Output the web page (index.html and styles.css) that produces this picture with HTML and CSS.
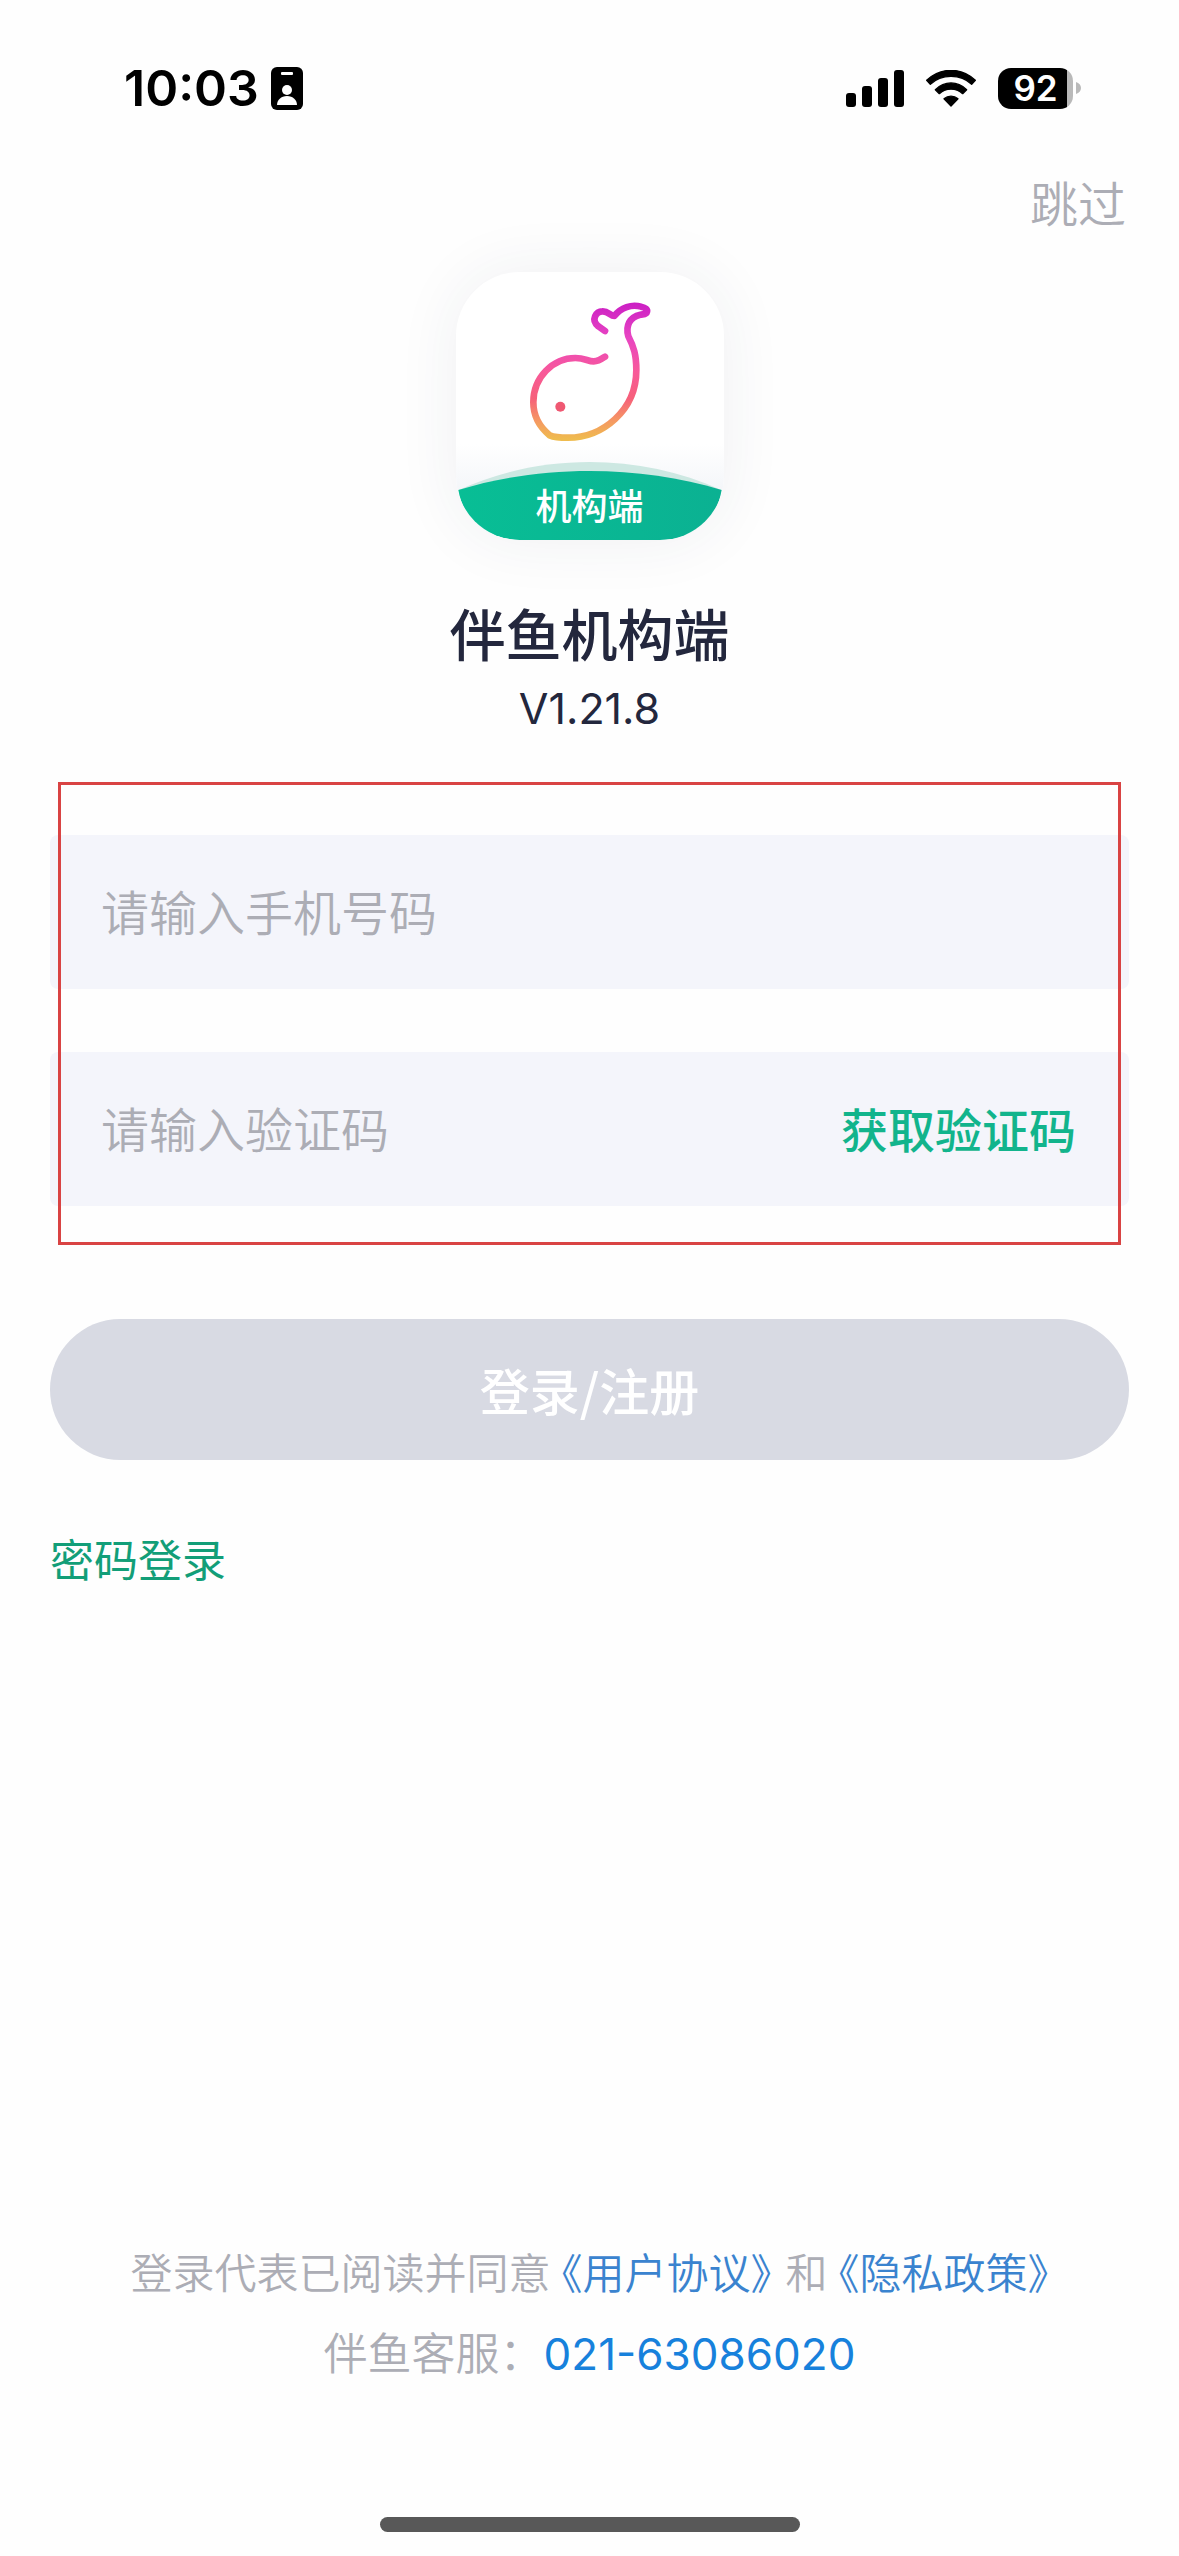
FILE: index.html
```
<!DOCTYPE html>
<html lang="zh-CN">
    <head>
        <meta charset="UTF-8">
        <meta name="viewport" content="width=device-width, initial-scale=1">
        <title>伴鱼机构端</title>
        <link rel="stylesheet" href="styles.css">
    </head>

    <body class="login">
        <div class="status">
            <span class="status__time">10:03</span>
            <svg class="status__badge" width="32" height="43" viewBox="0 0 32 43" aria-hidden="true">
                <rect width="32" height="43" rx="6"/>
                <rect x="10" y="5" width="12" height="3" rx="1" fill="#fff"/>
                <circle cx="16" cy="23" r="5" fill="#fff"/>
                <path d="M6 38c0-5 4-9 10-9s10 4 10 9z" fill="#fff"/>
            </svg>

            <div class="status__icons">
                <svg width="58" height="37" viewBox="0 0 58 37" aria-hidden="true">
                    <rect y="23" width="10" height="14" rx="3"/>
                    <rect x="16" y="16" width="10" height="21" rx="3"/>
                    <rect x="32" y="8" width="10" height="29" rx="3"/>
                    <rect x="48" width="10" height="37" rx="3"/>
                </svg>
                <svg width="50" height="37" viewBox="320 87 150 111" aria-hidden="true">
                    <g stroke="#000" stroke-width="4" stroke-linejoin="round">
                        <path d="M322 118C364 78 426 78 468 118L457 130C424 98 366 98 333 130Z"/>
                        <path d="M348 146C376 119 414 119 442 146L430 158C410 140 380 140 360 158Z"/>
                        <path d="M374 173C386 163 404 163 416 173L395 195Z"/>
                    </g>
                </svg>
                <div class="status__battery">
                    <span class="status__battery__level">92</span>
                    <svg width="5" height="12" viewBox="0 0 5 12" aria-hidden="true">
                        <path d="M0 0c3 1 5 3 5 6s-2 5-5 6z" fill="#b9b9b9"/>
                    </svg>
                </div>
            </div>
        </div>

        <main class="login__main">
            <button class="login__skip" type="button">跳过</button>

            <header class="brand">
                <div class="brand__logo">
                    <svg class="brand__logo__art" viewBox="169 154 804 804" aria-hidden="true">
                        <defs>
                            <linearGradient id="fish" gradientUnits="userSpaceOnUse" x1="0" y1="250" x2="0" y2="655">
                                <stop offset="0" stop-color="#cc20c4"/>
                                <stop offset="0.25" stop-color="#e845c2"/>
                                <stop offset="0.5" stop-color="#f8599a"/>
                                <stop offset="0.7" stop-color="#f6607a"/>
                                <stop offset="0.87" stop-color="#f59a62"/>
                                <stop offset="1" stop-color="#efbb4e"/>
                            </linearGradient>
                            <linearGradient id="wave" x1="0" y1="0" x2="1" y2="0">
                                <stop offset="0" stop-color="#08be95"/>
                                <stop offset="1" stop-color="#0bb192"/>
                            </linearGradient>
                            <linearGradient id="haze" x1="0" y1="0" x2="0" y2="1">
                                <stop offset="0" stop-color="#fff"/>
                                <stop offset="1" stop-color="#f4f6f9"/>
                            </linearGradient>
                        </defs>
                        <path d="M169 670H975V808H169Z" fill="url(#haze)"/>
                        <path d="M177 808C420 696 720 696 965 808Z" fill="#cde8e2"/>
                        <path d="M176 808C420 732 720 732 966 808C950 900 885 958 780 958H370C262 958 192 900 176 808Z" fill="url(#wave)"/>
                        <g fill="none" stroke="url(#fish)" stroke-width="20" stroke-linecap="round" stroke-linejoin="round">
                            <path d="M616 331L596 317C572 297 590 272 608 272C626 271 632 286 644 286C664 260 696 250 724 258C738 261 744 267 742 273C740 282 732 280 722 282C690 289 677 315 686 347C702 378 710 402 710 448C710 570 608 651 505 651C480 651 462 649 450 644C416 616 401 580 401 545C401 470 460 412 527 412C555 412 565 422 582 422C597 422 606 415 616 408"/>
                        </g>
                        <circle cx="482" cy="558" r="15" fill="#ef5872"/>
                    </svg>
                    <span class="brand__logo__label">机构端</span>
                </div>
                <h1 class="brand__name">伴鱼机构端</h1>
                <p class="brand__version">V1.21.8</p>
            </header>

            <form class="form">
                <div class="form__fields">
                    <div class="form__field">
                        <input class="form__input" type="tel" placeholder="请输入手机号码" aria-label="手机号码">
                    </div>
                    <div class="form__field">
                        <input class="form__input" type="text" placeholder="请输入验证码" aria-label="验证码">
                        <button class="form__code" type="button">获取验证码</button>
                    </div>
                </div>
                <button class="form__submit" type="submit" disabled>登录/注册</button>
            </form>

            <a class="login__password" href="#">密码登录</a>
        </main>

        <footer class="footer">
            <p class="footer__terms">登录代表已阅读并同意<a class="footer__link" href="#">《用户协议》</a>和<a class="footer__link" href="#">《隐私政策》</a></p>
            <p class="footer__service">伴鱼客服：<a class="footer__phone" href="tel:021-63086020">021-63086020</a></p>
            <div class="footer__home"></div>
        </footer>
    </body>
</html>
```

FILE: styles.css
```
:root {
    --color-primary: #12b48c;
    --color-primary-dark: #129e78;
    --color-text: #23273d;
    --color-muted: #acadb5;
    --color-field: #f4f5fb;
    --color-disabled: #d8dae3;
    --color-link: #3a83cf;
    --color-phone: #1781dc;
    --color-frame: #d94343;
    --gutter: 50px;
}

* {
    box-sizing: border-box;
}

body,
h1,
p {
    margin: 0;
}

button,
input {
    background: none;
    border: none;
    font: inherit;
    margin: 0;
    padding: 0;
}

a {
    text-decoration: none;
}

svg {
    display: block;
}

.login {
    background-color: #fefefe;
    color: var(--color-text);
    display: flex;
    flex-direction: column;
    font-family: Inter, "Noto Sans CJK SC", sans-serif;
    font-size: 48px;
    line-height: 64px;
    min-height: 100vh;
}

/* status bar */
.status {
    align-items: center;
    color: #000;
    display: flex;
    gap: 12px;
    padding: 56px 98px 0 124px;
}

.status__time {
    font-size: 50px;
    font-weight: 600;
}

.status__icons {
    align-items: center;
    display: flex;
    gap: 22px;
    margin-left: auto;
}

.status__battery {
    align-items: center;
    display: flex;
    gap: 3px;
}

.status__battery__level {
    background: linear-gradient(90deg, #000 69px, #b9b9b9 69px);
    border-radius: 13px;
    color: #fff;
    font-size: 35px;
    font-weight: 600;
    line-height: 41px;
    text-align: center;
    width: 75px;
}

/* main column */
.login__main {
    align-items: flex-start;
    display: flex;
    flex-direction: column;
    padding: 53px var(--gutter) 0;
}

.login__skip {
    align-self: flex-end;
    color: var(--color-muted);
    font-weight: 350;
    padding-right: 3px;
}

.brand {
    align-items: center;
    align-self: stretch;
    display: flex;
    flex-direction: column;
    padding: 35px 0 99px;
}

.brand__logo {
    background-color: #fff;
    border-radius: 64px;
    box-shadow: 0 0 64px rgba(40, 50, 80, 0.07);
    height: 268px;
    overflow: hidden;
    position: relative;
    width: 268px;
}

.brand__logo__art {
    height: 100%;
    width: 100%;
}

.brand__logo__label {
    bottom: 9px;
    color: #fff;
    font-size: 36px;
    font-weight: 500;
    left: 0;
    line-height: 48px;
    position: absolute;
    right: 0;
    text-align: center;
}

.brand__name {
    font-size: 56px;
    font-weight: 500;
    line-height: 72px;
    margin-top: 60px;
}

.brand__version {
    font-size: 43px;
    line-height: 56px;
    margin-top: 8px;
}

/* form */
.form {
    align-self: stretch;
}

.form__fields {
    display: flex;
    flex-direction: column;
    gap: 63px;
    position: relative;
}

/* red frame drawn over both fields */
.form__fields::after {
    border: 3px solid var(--color-frame);
    content: "";
    inset: -53px 8px -39px;
    pointer-events: none;
    position: absolute;
}

.form__field {
    align-items: center;
    background-color: var(--color-field);
    border-radius: 8px;
    display: flex;
    padding: 47px 53px 43px 51px;
}

.form__input {
    color: var(--color-text);
    flex: 1;
    font-weight: 350;
    height: 64px;
    min-width: 0;
    outline: none;
}

.form__input::placeholder {
    color: var(--color-muted);
    opacity: 1;
}

.form__code {
    color: var(--color-primary);
    font-size: 47px;
    font-weight: 500;
}

.form__submit {
    background-color: var(--color-disabled);
    border-radius: 72px;
    color: #fff;
    display: block;
    font-family: "Noto Sans CJK SC", sans-serif;
    font-size: 50px;
    font-weight: 500;
    margin-top: 113px;
    padding: 38px 0 39px;
    width: 100%;
}

.login__password {
    color: var(--color-primary-dark);
    font-size: 44px;
    margin-top: 69px;
}

/* footer */
.footer {
    color: var(--color-muted);
    font-weight: 350;
    line-height: 80px;
    margin-top: auto;
    padding: 48px 24px 24px;
    text-align: center;
}

.footer__terms {
    font-size: 42px;
}

.footer__link {
    color: var(--color-link);
    font-feature-settings: "halt";
    margin: 0 14px 0 11px;
}

.footer__link:last-child {
    margin-right: 0;
}

.footer__service {
    font-size: 44px;
}

.footer__phone {
    color: var(--color-phone);
    font-weight: 400;
}

.footer__home {
    background-color: #585858;
    border-radius: 8px;
    height: 15px;
    margin: 123px auto 0;
    max-width: 420px;
}
```
